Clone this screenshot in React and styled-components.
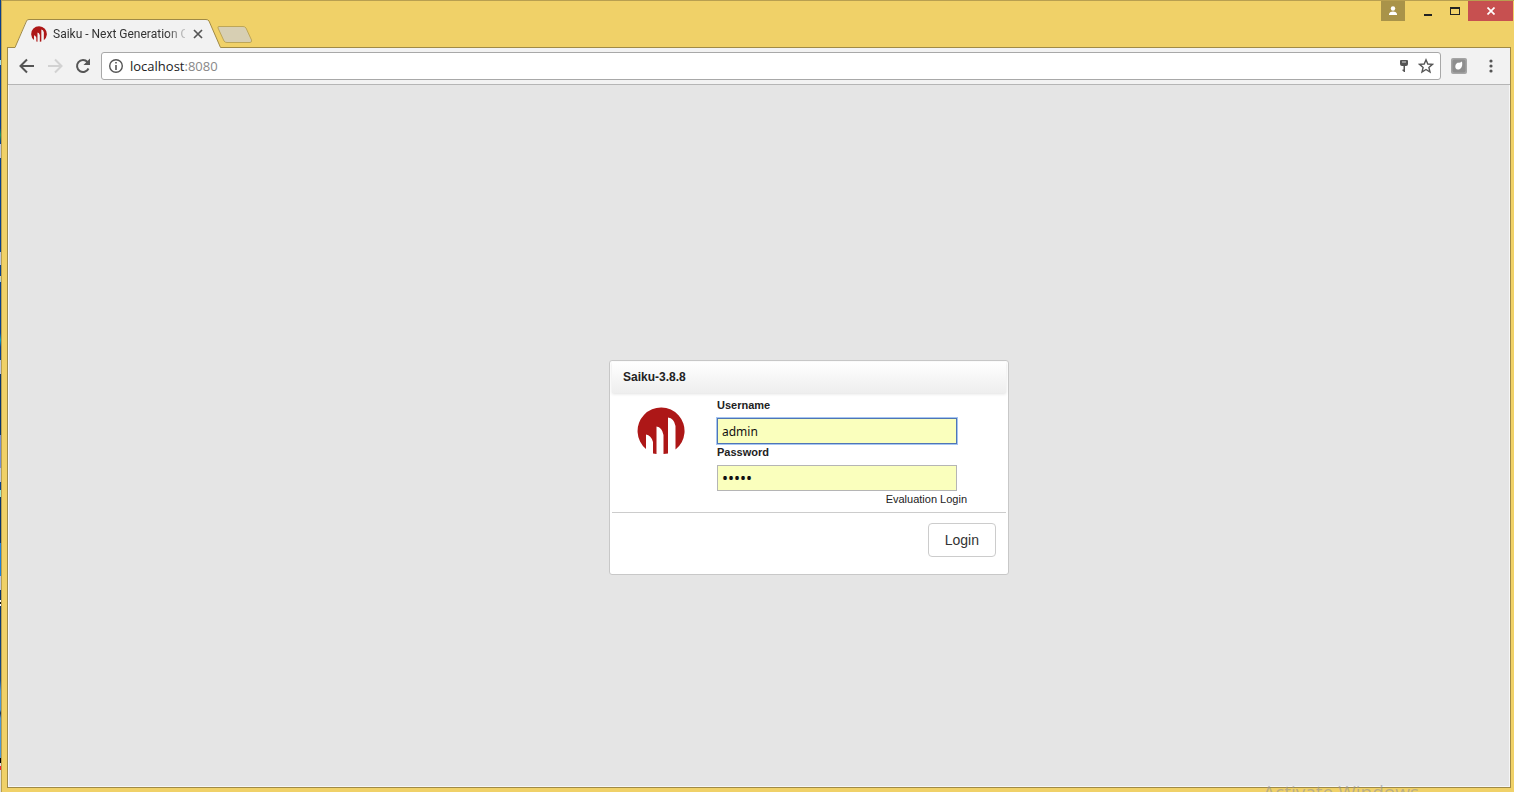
import React from "react";
import styled, { createGlobalStyle } from "styled-components";

const GlobalStyle = createGlobalStyle`
  * { box-sizing: border-box; }
  html, body { margin: 0; height: 100%; overflow: hidden; }
  #root { height: 100%; }
  button { border: 0; padding: 0; background: none; font: inherit; color: inherit; }
`;

const uiFont = `"Segoe UI", "Open Sans", "Noto Sans", sans-serif`;
const formFont = `"Liberation Sans", Arial, sans-serif`;

const Screen = styled.div`
  position: relative;
  display: flex;
  height: 100vh;
  overflow: hidden;
  font-family: ${uiFont};
  background: #f0d168;
`;

const DesktopEdge = styled.div`
  flex: 0 0 1px;
  background: linear-gradient(
    #0a3f8c 0, #0a3f8c 60px, #a5e0ee 60px, #a5e0ee 65px, #0a3f8c 65px, #0a3f8c 128px,
    #1c9a5e 135px, #0a3f8c 142px, #0a3f8c 144px, #c0c8dc 144px, #c0c8dc 158px,
    #08408c 158px, #08408c 252px, #c0c8dc 252px, #c0c8dc 265px, #08408c 265px,
    #08408c 276px, #e0d890 276px, #a0d0f0 282px, #08408c 282px, #08408c 333px,
    #08a0c8 340px, #08408c 347px, #08408c 360px, #c0c8dc 360px, #c0c8dc 374px,
    #08346c 374px, #08346c 435px, #7890d0 435px, #7890d0 468px, #c0c8dc 468px,
    #c0c8dc 482px, #08408c 482px, #08408c 490px, #a0e8d0 490px, #a0e8d0 497px,
    #08346c 497px, #08346c 543px, #1c80dc 543px, #1c80dc 576px, #c0c8dc 576px,
    #c0c8dc 590px, #08346c 590px, #08346c 600px, #fff 600px, #fff 602px, #111 602px,
    #111 604px, #fff 604px, #fff 606px, #08346c 606px, #184c84 680px, #4c98d4 691px,
    #4c98d4 710px, #102c50 713px, #4c98d4 718px, #4c98d4 758px, #000 758px,
    #000 763px, #ddd 763px, #ddd 766px, #e23 766px, #e23 770px, #ddd 770px
  );
`;

const BrowserWindow = styled.div`
  flex: 1;
  min-width: 0;
  display: flex;
  flex-direction: column;
  border-top: 1px solid #b89f50;
  border-left: 1px solid #b89f50;
  padding: 0 3px 4px 5px;
`;

const TitleBar = styled.header`
  display: flex;
  align-items: flex-start;
  justify-content: space-between;
  height: 46px;
  margin-right: -2px;
`;

const TabStrip = styled.div`
  display: flex;
  padding: 18px 0 0 8px;
`;

const Tab = styled.div`
  position: relative;
  z-index: 1;
  display: flex;
  align-items: center;
  width: 206px;
  height: 29px;
  padding: 0 18px 0 16px;
`;

const TabShape = styled.svg`
  position: absolute;
  inset: 0;
`;

const TabTitle = styled.span`
  position: relative;
  flex: 1;
  min-width: 0;
  margin-left: 6px;
  overflow: hidden;
  white-space: nowrap;
  font-family: Roboto, ${uiFont};
  font-size: 12px;
  line-height: 20px;
  color: #333;
  mask-image: linear-gradient(to right, #000 86%, transparent 104%);
`;

const TabLogo = styled.svg`
  position: relative;
  flex: none;
`;

const TabClose = styled.button`
  position: relative;
  display: flex;
  margin-left: 8px;
`;

const NewTab = styled.button`
  display: flex;
  height: 18px;
  margin: 7px 0 0 -4px;
`;

const WindowControls = styled.div`
  display: flex;
`;

const ControlButton = styled.button`
  display: flex;
  align-items: center;
  justify-content: center;
  width: ${(p) => p.$width || 27}px;
  height: 20px;
  margin-right: ${(p) => p.$gap || 0}px;
  background: ${(p) => p.$fill || "transparent"};
`;

const Frame = styled.div`
  flex: 1;
  min-height: 0;
  display: flex;
  flex-direction: column;
  border: 1px solid #a08a45;
  background: #f2f2f2;
`;

const Toolbar = styled.nav`
  display: flex;
  align-items: center;
  height: 37px;
  padding: 0 9px;
  border-bottom: 1px solid #b5b5b5;
`;

const ToolButton = styled.button`
  display: flex;
  align-items: center;
  justify-content: center;
  width: 20px;
  height: 20px;
  margin-right: ${(p) => p.$gap || 0}px;
`;

const AddressBar = styled.div`
  flex: 1;
  display: flex;
  align-items: center;
  height: 28px;
  margin-right: 8px;
  padding: 0 4px 0 6px;
  border: 1px solid #a8a8a8;
  border-radius: 3px;
  background: #fff;
`;

const Address = styled.div`
  flex: 1;
  margin-left: 6px;
  font-size: 13px;
  line-height: 20px;
  color: #222;
`;

const Port = styled.span`
  color: #888;
`;

const Page = styled.main`
  flex: 1;
  display: flex;
  align-items: center;
  justify-content: center;
  padding: 64px 0 0 100px;
  border: solid #f6f6f6;
  border-width: 0 1px 1px;
  background: #e5e5e5;
`;

const Dialog = styled.form`
  width: 400px;
  padding: 1px 2px 17px;
  border: 1px solid #c8c8c8;
  border-radius: 3px;
  background: #fff;
  font-family: ${formFont};
  font-size: 11px;
  line-height: 16px;
  color: #222;
`;

const DialogTitle = styled.h1`
  margin: 0;
  padding: 7px 11px 8px;
  font-size: 12px;
  line-height: 16px;
  background: linear-gradient(#fff, #eee);
  box-shadow: 0 1px 3px rgba(0, 0, 0, 0.12);
`;

const DialogBody = styled.div`
  display: flex;
  padding: 4px 39px 5px 25px;
  border-bottom: 1px solid #ccc;
`;

const BrandLogo = styled.svg`
  flex: none;
  margin: 10px 32px 0 0;
`;

const Fields = styled.div`
  flex: 1;
  display: flex;
  flex-direction: column;
`;

const Label = styled.label`
  padding-bottom: 5px;
  font-weight: bold;
`;

const TextBox = styled.input`
  width: 240px;
  height: 26px;
  padding: 0 4px;
  border: 1px solid #b5b5b5;
  border-radius: 0;
  outline: none;
  background: #faffbd;
  font-family: "Noto Sans", ${uiFont};
  font-size: ${(p) => (p.type === "password" ? 16 : 12)}px;
  color: #111;

  &:focus {
    border-color: #5075b5;
    box-shadow: 0 0 0 1px #a4c5f2;
  }
`;

const EvaluationLink = styled.a`
  align-self: flex-end;
  color: #222;
  text-decoration: none;
`;

const DialogActions = styled.div`
  display: flex;
  justify-content: flex-end;
  padding: 10px 10px 0 0;
`;

const LoginButton = styled.button`
  height: 34px;
  padding: 0 16px;
  border: 1px solid #ccc;
  border-radius: 4px;
  background: #fff;
  font-size: 14px;
  color: #333;
`;

const Watermark = styled.div`
  position: absolute;
  right: 95px;
  bottom: -14px;
  font-size: 19px;
  line-height: 28px;
  color: rgba(150, 150, 150, 0.6);
`;

function SaikuMark({ as: Svg, size }) {
  return (
    <Svg width={size} height={size} viewBox="0 0 48 48" aria-hidden="true">
      <path
        fill="#ad1717"
        d="M9 42A23.500 23.500 0 1 1 38.500 42.500V19Q37 11 31 10.500V46.500L26.500 47V28Q25 20 19.500 19.500V47L16 46.500V35Q14 28 9 27.500Z"
      />
    </Svg>
  );
}

export default function App() {
  return (
    <Screen>
      <GlobalStyle />
      <DesktopEdge />
      <BrowserWindow>
        <TitleBar>
          <TabStrip>
            <Tab>
              <TabShape width="206" height="29" viewBox="0 0 206 29" aria-hidden="true">
                <path d="M0 28.500L11 2Q12 .5 14 .5H191Q193 .5 194 2L205.500 28.500V29H0Z" fill="#f2f2f2" />
                <path d="M0 28.500L11.500 2Q12 .5 14 .5H191Q193 .5 194 2L205.500 28.500" fill="none" stroke="#a08a45" />
              </TabShape>
              <SaikuMark as={TabLogo} size={16} />
              <TabTitle>Saiku - Next Generation Open Source Analytics</TabTitle>
              <TabClose aria-label="Close tab">
                <svg width="10" height="10" viewBox="0 0 10 10">
                  <path d="M1 1L9 9M9 1L1 9" stroke="#555" strokeWidth="1.700" />
                </svg>
              </TabClose>
            </Tab>
            <NewTab aria-label="New tab">
              <svg width="36" height="18" viewBox="0 0 36 18">
                <path
                  d="M2 .5H26Q28 .5 29 2L34.500 14Q35 16.500 33 16.500H10Q8 16.500 7 15L1 2Q.5 .5 2 .5Z"
                  fill="#d7cfb3"
                  stroke="#bda658"
                />
              </svg>
            </NewTab>
          </TabStrip>
          <WindowControls>
            <ControlButton $width={24} $gap={9} $fill="#a99349" aria-label="Profile">
              <svg width="10" height="10" viewBox="0 0 10 10" fill="#fff">
                <circle cx="5" cy="2.500" r="2.200" />
                <path d="M1 9V7.500Q2 5.500 5 5.500T9 7.500V9Z" />
              </svg>
            </ControlButton>
            <ControlButton aria-label="Minimize">
              <svg width="10" height="10" viewBox="0 0 10 10">
                <path d="M1 8H9V10H1Z" fill="#222" />
              </svg>
            </ControlButton>
            <ControlButton aria-label="Maximize">
              <svg width="10" height="8" viewBox="0 0 10 8">
                <path d="M0 0H10V8H0ZM1 2V7H9V2Z" fill="#222" fillRule="evenodd" />
              </svg>
            </ControlButton>
            <ControlButton $width={45} $fill="#c75050" aria-label="Close window">
              <svg width="8" height="8" viewBox="0 0 8 8">
                <path d="M.5 .5L7.500 7.500M7.500 .5L.5 7.500" stroke="#fff" strokeWidth="1.700" />
              </svg>
            </ControlButton>
          </WindowControls>
        </TitleBar>
        <Frame>
          <Toolbar>
            <ToolButton $gap={8} aria-label="Back">
              <svg width="16" height="16" viewBox="0 0 16 16" fill="none" stroke="#555" strokeWidth="2">
                <path d="M15 8H2M8 1.500L1.500 8L8 14.500" />
              </svg>
            </ToolButton>
            <ToolButton $gap={8} aria-label="Forward">
              <svg width="16" height="16" viewBox="0 0 16 16" fill="none" stroke="#d2d2d2" strokeWidth="2">
                <path d="M1 8H14M8 1.500L14.500 8L8 14.500" />
              </svg>
            </ToolButton>
            <ToolButton $gap={8} aria-label="Reload">
              <svg width="16" height="16" viewBox="0 0 16 16">
                <path d="M13.500 10.500A6 6 0 1 1 12.500 4" fill="none" stroke="#555" strokeWidth="2" />
                <path d="M15 .5V7H8.500Z" fill="#555" />
              </svg>
            </ToolButton>
            <AddressBar>
              <svg width="16" height="16" viewBox="0 0 16 16" aria-hidden="true">
                <circle cx="8" cy="8" r="6.300" fill="none" stroke="#555" strokeWidth="1.400" />
                <path d="M7.200 7H8.800V12H7.200ZM7.200 4H8.800V5.600H7.200Z" fill="#555" />
              </svg>
              <Address>
                localhost<Port>:8080</Port>
              </Address>
              <ToolButton $gap={2} aria-label="Saved password">
                <svg width="10" height="14" viewBox="0 0 10 14">
                  <path d="M1 2Q1 1 2 1H8Q9 1 9 2V5Q9 7 7 7H6V13H4.500V12H3.500V10.500H4.500V7H3Q1 7 1 5Z" fill="#555" />
                  <path d="M3 2.500H7V3.500H3Z" fill="#ddd" />
                </svg>
              </ToolButton>
              <ToolButton aria-label="Bookmark">
                <svg width="16" height="16" viewBox="0 0 16 16">
                  <path
                    d="M8 1.800L9.800 6L14.400 6.400L10.900 9.400L12 14L8 11.500L4 14L5.100 9.400L1.600 6.400L6.200 6Z"
                    fill="none"
                    stroke="#555"
                    strokeWidth="1.400"
                  />
                </svg>
              </ToolButton>
            </AddressBar>
            <ToolButton $gap={12} aria-label="Extension">
              <svg width="16" height="16" viewBox="0 0 16 16">
                <rect width="16" height="16" rx="2" fill="#a5a5a5" />
                <rect x="1.500" y="1.500" width="13" height="13" rx="2" fill="#8e8e8e" />
                <path d="M11 3.500Q12 9 9 11Q6 12.500 4.500 10Q3.500 6 7 4.500Q8 5.500 11 3.500Z" fill="#fff" />
              </svg>
            </ToolButton>
            <ToolButton aria-label="Menu">
              <svg width="4" height="14" viewBox="0 0 4 14" fill="#555">
                <circle cx="2" cy="2" r="1.600" />
                <circle cx="2" cy="7" r="1.600" />
                <circle cx="2" cy="12" r="1.600" />
              </svg>
            </ToolButton>
          </Toolbar>
          <Page>
            <Dialog onSubmit={(event) => event.preventDefault()}>
              <DialogTitle>Saiku-3.8.8</DialogTitle>
              <DialogBody>
                <SaikuMark as={BrandLogo} size={48} />
                <Fields>
                  <Label htmlFor="username">Username</Label>
                  <TextBox id="username" type="text" defaultValue="admin" autoFocus />
                  <Label htmlFor="password">Password</Label>
                  <TextBox id="password" type="password" defaultValue="admin" />
                  <EvaluationLink href="#evaluation">Evaluation Login</EvaluationLink>
                </Fields>
              </DialogBody>
              <DialogActions>
                <LoginButton type="submit">Login</LoginButton>
              </DialogActions>
            </Dialog>
          </Page>
        </Frame>
      </BrowserWindow>
      <Watermark>Activate Windows</Watermark>
    </Screen>
  );
}
